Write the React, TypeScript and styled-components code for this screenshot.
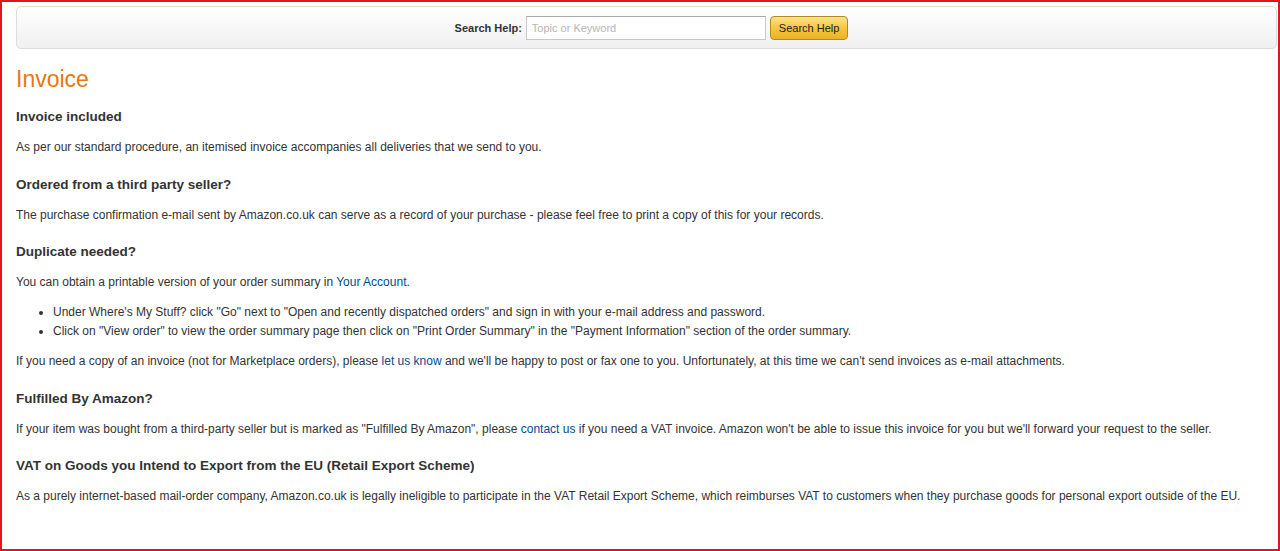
import styled, { createGlobalStyle } from "styled-components";

const GlobalStyle = createGlobalStyle`
  html, body {
    margin: 0;
    padding: 0;
    background: #fff;
  }
  body {
    font-family: "Liberation Sans", Arial, sans-serif;
    color: #333;
  }
`;

const Frame = styled.div`
  box-sizing: border-box;
  width: 1280px;
  height: 551px;
  border: 2px solid #e2141c;
  overflow: hidden;
  padding: 4px 0 0 14px;
`;

const SearchBar = styled.div`
  box-sizing: border-box;
  height: 43px;
  margin-right: 1px;
  border: 1px solid #dcdcdc;
  border-radius: 5px;
  background: linear-gradient(#ffffff, #f0f0f0);
  display: flex;
  align-items: center;
  justify-content: center;
  gap: 4px;
  padding-left: 10px;
`;

const SearchLabel = styled.label`
  font-size: 11px;
  font-weight: bold;
  color: #333;
`;

const SearchInput = styled.input`
  box-sizing: border-box;
  width: 240px;
  height: 24px;
  border: 1px solid #c8c8c8;
  border-top-color: #a8a8a8;
  padding: 0 5px;
  font-family: "Liberation Sans", Arial, sans-serif;
  font-size: 11px;
  &::placeholder {
    color: #b5b5b5;
  }
`;

const SearchButton = styled.button`
  box-sizing: border-box;
  height: 24px;
  padding: 0 8px;
  border: 1px solid #b7891c;
  border-radius: 4px;
  background: linear-gradient(#fbe38b, #f4c235 60%, #eab32a);
  font-family: "Liberation Sans", Arial, sans-serif;
  font-size: 11px;
  color: #222;
`;

const Content = styled.div`
  padding-top: 16px;
`;

const Title = styled.h1`
  margin: 0 0 15px;
  font-size: 23px;
  font-weight: normal;
  color: #e47911;
  line-height: 28px;
`;

const Heading = styled.h2`
  margin: 0 0 14px;
  font-size: 13.5px;
  font-weight: bold;
  color: #333;
  line-height: 17px;
`;

const Para = styled.p`
  margin: 0 0 19.5px;
  font-size: 12px;
  line-height: 17px;
  color: #333;
`;

const Bullets = styled.ul`
  margin: -7.5px 0 12px;
  padding-left: 37px;
  font-size: 12px;
  line-height: 19px;
  color: #333;
`;

const Link = styled.a`
  color: #004b91;
  text-decoration: none;
`;

export default function App() {
  return (
    <>
      <GlobalStyle />
      <Frame>
        <SearchBar>
          <SearchLabel>Search Help:</SearchLabel>
          <SearchInput placeholder="Topic or Keyword" />
          <SearchButton>Search Help</SearchButton>
        </SearchBar>
        <Content>
          <Title>Invoice</Title>
          <Heading>Invoice included</Heading>
          <Para>
            As per our standard procedure, an itemised invoice accompanies all
            deliveries that we send to you.
          </Para>
          <Heading>Ordered from a third party seller?</Heading>
          <Para>
            The purchase confirmation e-mail sent by Amazon.co.uk can serve as a
            record of your purchase - please feel free to print a copy of this
            for your records.
          </Para>
          <Heading>Duplicate needed?</Heading>
          <Para>
            You can obtain a printable version of your order summary in{" "}
            <Link href="#">Your Account</Link>.
          </Para>
          <Bullets>
            <li>
              Under Where's My Stuff? click "Go" next to "Open and recently
              dispatched orders" and sign in with your e-mail address and
              password.
            </li>
            <li>
              Click on "View order" to view the order summary page then click on
              "Print Order Summary" in the "Payment Information" section of the
              order summary.
            </li>
          </Bullets>
          <Para>
            If you need a copy of an invoice (not for Marketplace orders), please{" "}
            <Link href="#">let us know</Link> and we'll be happy to post or fax
            one to you. Unfortunately, at this time we can't send invoices as
            e-mail attachments.
          </Para>
          <Heading>Fulfilled By Amazon?</Heading>
          <Para>
            If your item was bought from a third-party seller but is marked as
            "Fulfilled By Amazon", please <Link href="#">contact us</Link> if
            you need a VAT invoice. Amazon won't be able to issue this invoice
            for you but we'll forward your request to the seller.
          </Para>
          <Heading>VAT on Goods you Intend to Export from the EU (Retail Export Scheme)</Heading>
          <Para>
            As a purely internet-based mail-order company, Amazon.co.uk is
            legally ineligible to participate in the VAT Retail Export Scheme,
            which reimburses VAT to customers when they purchase goods for
            personal export outside of the EU.
          </Para>
        </Content>
      </Frame>
    </>
  );
}
